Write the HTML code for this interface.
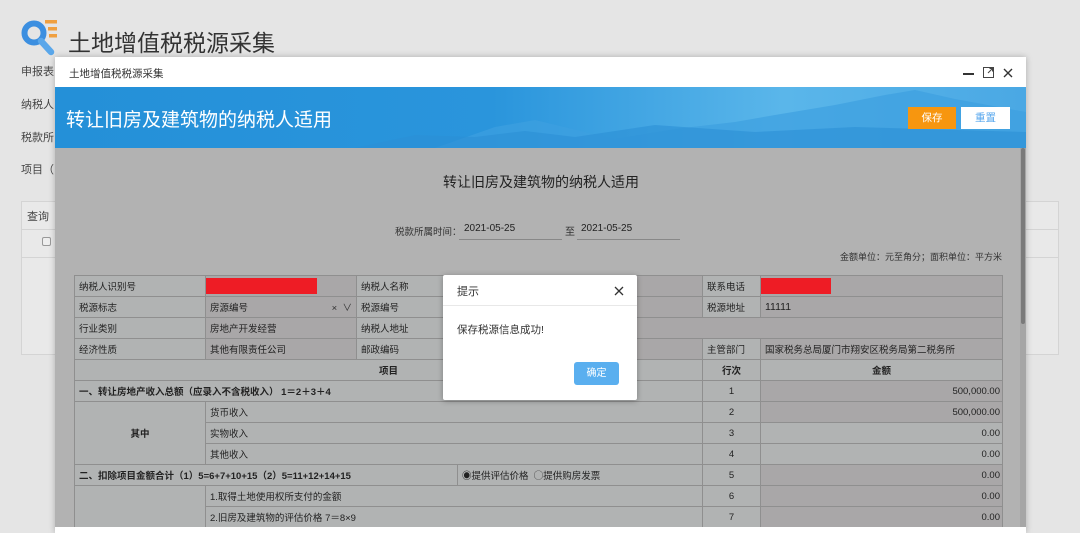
<!DOCTYPE html>
<html><head><meta charset="utf-8">
<style>
*{margin:0;padding:0;box-sizing:border-box}
body{width:1080px;height:533px;overflow:hidden;background:#e5e5e5;font-family:"Liberation Sans","Noto Sans CJK SC",sans-serif;color:#333;position:relative;font-size:10px}
.a{position:absolute;white-space:nowrap}
.lab{font-size:11px;color:#444}
table{border-collapse:collapse;position:absolute;left:74px;top:275px;table-layout:fixed}
td{border:1px solid #8f8f8f;height:21px;font-size:9.5px;color:#222;padding:0 4px;white-space:nowrap;overflow:hidden;background:#b1b3b3}
td.v{background:#a9a7a8}
td.c{text-align:center}
td.r{text-align:right;padding-right:2px}
td.b{font-weight:bold}
</style></head><body>
<svg class="a" style="left:21px;top:18px" width="38" height="40" viewBox="0 0 38 40">
<circle cx="13" cy="15" r="9.5" fill="none" stroke="#3c8fe0" stroke-width="6"/>
<line x1="20" y1="23" x2="30" y2="34" stroke="#5aa7ea" stroke-width="6.5" stroke-linecap="round"/>
<rect x="24" y="2" width="12" height="3.5" fill="#f0a040"/>
<rect x="27" y="9" width="9" height="3.5" fill="#f0a040"/>
<rect x="28" y="16" width="8" height="3.5" fill="#f0a040"/>
</svg>
<div class="a" style="left:68px;top:24px;font-size:23px;color:#333">土地增值税税源采集</div>
<div class="a lab" style="left:21px;top:63px">申报表</div>
<div class="a lab" style="left:21px;top:96px">纳税人</div>
<div class="a lab" style="left:21px;top:129px">税款所</div>
<div class="a lab" style="left:21px;top:161px">项目（</div>
<div class="a" style="left:21px;top:201px;width:1038px;height:154px;border:1px solid #d4d4d4;background:#e9e9e9"></div>
<div class="a" style="left:21px;top:229px;width:1038px;height:1px;background:#d4d4d4"></div>
<div class="a" style="left:21px;top:257px;width:1038px;height:1px;background:#d4d4d4"></div>
<div class="a lab" style="left:27px;top:208px">查询</div>
<div class="a" style="left:42px;top:237px;width:9px;height:9px;border:1px solid #999;border-radius:2px;background:#eee"></div>

<div class="a" style="left:55px;top:57px;width:971px;height:476px;background:#fff;box-shadow:0 0 6px rgba(0,0,0,.25)"></div>
<div class="a" style="left:69px;top:66px;font-size:10.5px;color:#333">土地增值税税源采集</div>
<div class="a" style="left:963px;top:73px;width:11px;height:2px;background:#333"></div>
<svg class="a" style="left:983px;top:67px" width="11" height="11" viewBox="0 0 11 11"><rect x="0.5" y="0.5" width="10" height="10" fill="none" stroke="#444"/><path d="M5 6L9.5 1.5M6.5 1.5h3v3" stroke="#444" fill="none"/></svg>
<svg class="a" style="left:1003px;top:68px" width="10" height="10" viewBox="0 0 10 10"><path d="M1 1L9 9M9 1L1 9" stroke="#333" stroke-width="1.4"/></svg>
<div class="a" style="left:55px;top:87px;width:971px;height:61px;background:linear-gradient(90deg,#2490d8 0%,#2a95dc 45%,#5ab6ea 75%,#4aa8e4 100%)"></div>
<svg class="a" style="left:55px;top:87px" width="971" height="61" viewBox="0 0 971 61">
<path d="M380 61 L440 40 L480 33 L530 45 L560 52 L620 42 L680 35 L720 28 L780 18 L830 8 L860 3 L900 12 L971 25 L971 61Z" fill="#3d9fe0" opacity=".7"/>
<path d="M300 61 L360 48 L420 50 L470 44 L520 50 L600 38 L700 45 L800 40 L971 45 L971 61Z" fill="#2c8fd6" opacity=".6"/>
</svg>
<div class="a" style="left:66px;top:105px;font-size:19px;color:#fff">转让旧房及建筑物的纳税人适用</div>
<div class="a" style="left:908px;top:107px;width:48px;height:22px;background:#f7960f;color:#fff;font-size:10.5px;text-align:center;line-height:22px">保存</div>
<div class="a" style="left:961px;top:107px;width:49px;height:22px;background:#fff;color:#5aa8ee;font-size:10.5px;text-align:center;line-height:22px">重置</div>

<div class="a" style="left:55px;top:148px;width:965px;height:379px;background:#b2b2b2"></div>
<div class="a" style="left:1020px;top:148px;width:6px;height:379px;background:#a6a6a6"></div>
<div class="a" style="left:1021px;top:148px;width:4px;height:176px;background:#7a7a7a;border-radius:2px"></div>
<div class="a" style="left:443px;top:172px;font-size:14px;color:#222">转让旧房及建筑物的纳税人适用</div>
<div class="a" style="left:395px;top:224px;font-size:9.5px;color:#333">税款所属时间：</div>
<div class="a" style="left:464px;top:223px;font-size:10px;color:#222">2021-05-25</div>
<div class="a" style="left:459px;top:239px;width:103px;height:1px;background:#888"></div>
<div class="a" style="left:565px;top:223px;font-size:10px;color:#333">至</div>
<div class="a" style="left:581px;top:223px;font-size:10px;color:#222">2021-05-25</div>
<div class="a" style="left:577px;top:239px;width:103px;height:1px;background:#888"></div>
<div class="a" style="left:840px;top:250px;font-size:9px;color:#333">金额单位：元至角分；面积单位：平方米</div>

<table>
<colgroup><col style="width:131px"><col style="width:151px"><col style="width:88px"><col style="width:13px"><col style="width:245px"><col style="width:58px"><col style="width:242px"></colgroup>
<tr><td>纳税人识别号</td><td class="v" style="padding:0"><div style="width:111px;height:16px;background:#ee1c25"></div></td><td>纳税人名称</td><td class="v" colspan="2"></td><td>联系电话</td><td class="v" style="padding:0"><div style="width:70px;height:16px;background:#ee1c25"></div></td></tr>
<tr><td>税源标志</td><td class="v">房源编号<span style="float:right;color:#333">×&nbsp;&nbsp;∨</span></td><td>税源编号</td><td class="v" colspan="2"></td><td>税源地址</td><td class="v" style="font-size:10.5px">11111</td></tr>
<tr><td>行业类别</td><td class="v">房地产开发经营</td><td>纳税人地址</td><td class="v" colspan="4"></td></tr>
<tr><td>经济性质</td><td class="v">其他有限责任公司</td><td>邮政编码</td><td class="v" colspan="2"></td><td>主管部门</td><td class="v">国家税务总局厦门市翔安区税务局第二税务所</td></tr>
<tr><td class="c b" colspan="5">项目</td><td class="c b">行次</td><td class="c b">金额</td></tr>
<tr><td class="b" colspan="5">一、转让房地产收入总额（应录入不含税收入） 1＝2＋3＋4</td><td class="c">1</td><td class="v r">500,000.00</td></tr>
<tr><td class="c b" rowspan="3">其中</td><td colspan="4">货币收入</td><td class="c">2</td><td class="v r">500,000.00</td></tr>
<tr><td colspan="4">实物收入</td><td class="c">3</td><td class="r">0.00</td></tr>
<tr><td colspan="4">其他收入</td><td class="c">4</td><td class="r">0.00</td></tr>
<tr><td class="b" colspan="4">二、扣除项目金额合计（1）5=6+7+10+15（2）5=11+12+14+15</td><td>◉提供评估价格 &nbsp;◯提供购房发票</td><td class="c">5</td><td class="v r">0.00</td></tr>
<tr><td rowspan="2"></td><td colspan="4">1.取得土地使用权所支付的金额</td><td class="c">6</td><td class="v r">0.00</td></tr>
<tr><td colspan="4">2.旧房及建筑物的评估价格 7＝8×9</td><td class="c">7</td><td class="v r">0.00</td></tr>
</table>
<div class="a" style="left:55px;top:527px;width:971px;height:6px;background:#fff"></div>

<div class="a" style="left:443px;top:275px;width:194px;height:125px;background:#fff;border-radius:2px;box-shadow:0 1px 6px rgba(0,0,0,.3)"></div>
<div class="a" style="left:443px;top:305px;width:194px;height:1px;background:#e8e8e8"></div>
<div class="a" style="left:457px;top:283px;font-size:11px;color:#333">提示</div>
<svg class="a" style="left:614px;top:286px" width="10" height="10" viewBox="0 0 10 10"><path d="M1 1L9 9M9 1L1 9" stroke="#333" stroke-width="1.3"/></svg>
<div class="a" style="left:457px;top:322px;font-size:10.5px;color:#333">保存税源信息成功!</div>
<div class="a" style="left:574px;top:362px;width:45px;height:23px;background:#5aafef;border-radius:3px;color:#fff;font-size:10px;text-align:center;line-height:23px">确定</div>
</body></html>
